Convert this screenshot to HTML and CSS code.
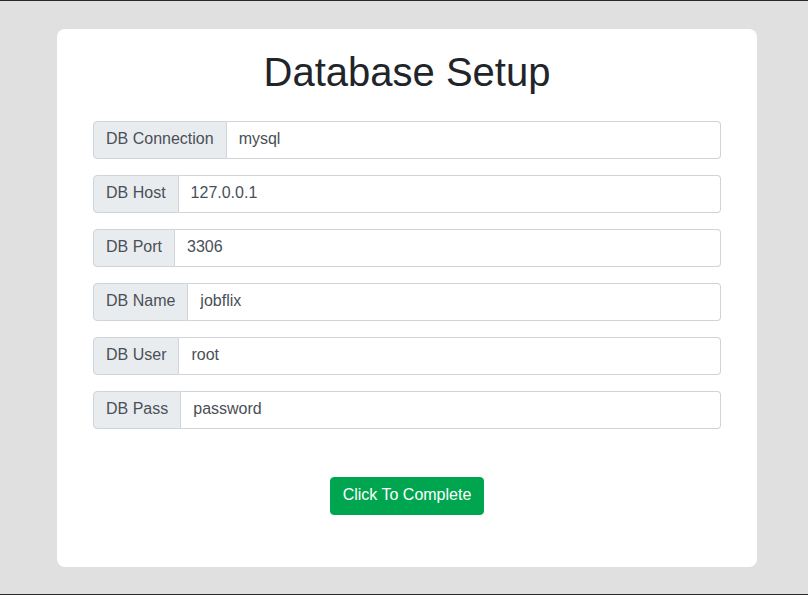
FILE: index.html
```html
<!DOCTYPE html>
<html lang="en">
<head>
<meta charset="utf-8">
<title>Database Setup</title>
<link rel="stylesheet" href="styles.css">
</head>
<body>
<div class="page">
  <div class="card">
    <h1 class="title">Database Setup</h1>
    <form class="form">
      <div class="group"><span class="label">DB Connection</span><input class="field" type="text" value="mysql"></div>
      <div class="group"><span class="label">DB Host</span><input class="field" type="text" value="127.0.0.1"></div>
      <div class="group"><span class="label">DB Port</span><input class="field" type="text" value="3306"></div>
      <div class="group"><span class="label">DB Name</span><input class="field" type="text" value="jobflix"></div>
      <div class="group"><span class="label">DB User</span><input class="field" type="text" value="root"></div>
      <div class="group"><span class="label">DB Pass</span><input class="field" type="text" value="password"></div>
      <div class="actions"><button class="btn" type="button">Click To Complete</button></div>
    </form>
  </div>
</div>
</body>
</html>
```
FILE: styles.css
```css
* { box-sizing: border-box; }
html, body { margin: 0; padding: 0; }
body {
  font-family: "Liberation Sans", Arial, sans-serif;
  background: #e0e0e0;
  color: #212529;
}
.page {
  height: 595px;
  border-top: 1px solid #2a2a2a;
  border-bottom: 1px solid #2a2a2a;
  padding: 28px 0 0 6px;
  display: flex;
  justify-content: center;
}
.card {
  width: 700px;
  height: 538px;
  background: #fff;
  border-radius: 8px;
  padding: 19px 36px 0;
}
.title {
  margin: 0 0 25px;
  font-size: 40px;
  font-weight: 400;
  line-height: 48px;
  text-align: center;
  color: #212529;
}
.form { display: flex; flex-direction: column; }
.group {
  display: flex;
  height: 38px;
  margin-bottom: 16px;
}
.label {
  display: flex;
  align-items: center;
  padding: 0 12px 2px;
  background: #e9ecef;
  border: 1px solid #ced4da;
  border-radius: 4px 0 0 4px;
  color: #495057;
  font-size: 16px;
  white-space: nowrap;
}
.field {
  flex: 1;
  min-width: 0;
  height: 38px;
  padding: 0 12px 2px;
  border: 1px solid #ced4da;
  border-left: 0;
  border-radius: 0 4px 4px 0;
  font-family: "Liberation Sans", Arial, sans-serif;
  font-size: 16px;
  color: #495057;
  background: #fff;
  outline: none;
}
.actions {
  display: flex;
  justify-content: center;
  padding-top: 32px;
}
.btn {
  height: 38px;
  padding: 0 12px 2px;
  background: #00a64f;
  border: 1px solid #00a64f;
  border-radius: 4px;
  color: #fff;
  font-family: "Liberation Sans", Arial, sans-serif;
  font-size: 16px;
  cursor: pointer;
}
```
